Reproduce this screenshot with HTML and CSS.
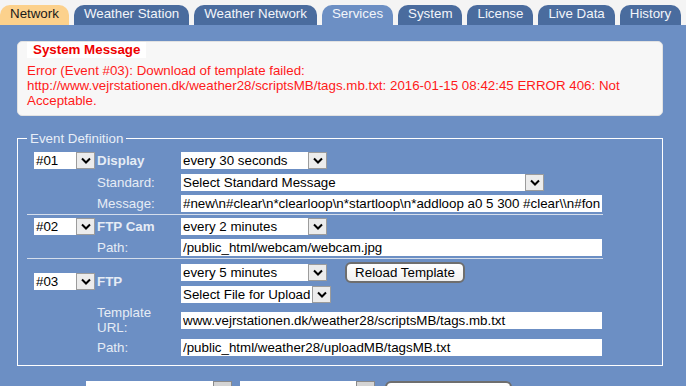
FILE: index.html
```html
<!DOCTYPE html>
<html lang="en">
<head>
    <meta charset="UTF-8">
    <title>Services</title>
    <link rel="stylesheet" href="styles.css">
</head>
<body>
    <div class="tabs">
        <span class="tab tab-hover">Network</span>
        <span class="tab">Weather Station</span>
        <span class="tab">Weather Network</span>
        <span class="tab tab-active">Services</span>
        <span class="tab">System</span>
        <span class="tab">License</span>
        <span class="tab">Live Data</span>
        <span class="tab">History</span>
    </div>

    <div class="page">
        <div class="message">
            <div class="message-title">System Message</div>
            <p class="message-text">Error (Event #03): Download of template failed: http://www.vejrstationen.dk/weather28/scriptsMB/tags.mb.txt: 2016-01-15 08:42:45 ERROR 406: Not Acceptable.</p>
        </div>

        <fieldset class="events">
            <legend>Event Definition</legend>

            <div class="event ev1">
                <span class="sel w-num c1"><span class="sel-val">#01</span><span class="sel-btn"><svg width="10" height="7" viewBox="0 0 10 7"><path d="M1 1.5 L5 5.5 L9 1.5" fill="none" stroke="#000" stroke-width="2"/></svg></span></span>
                <span class="name c2">Display</span>
                <span class="sel w-interval c3"><span class="sel-val">every 30 seconds</span><span class="sel-btn"><svg width="10" height="7" viewBox="0 0 10 7"><path d="M1 1.5 L5 5.5 L9 1.5" fill="none" stroke="#000" stroke-width="2"/></svg></span></span>

                <span class="label c2">Standard:</span>
                <span class="sel w-standard c3"><span class="sel-val">Select Standard Message</span><span class="sel-btn"><svg width="10" height="7" viewBox="0 0 10 7"><path d="M1 1.5 L5 5.5 L9 1.5" fill="none" stroke="#000" stroke-width="2"/></svg></span></span>

                <span class="label c2">Message:</span>
                <input class="field c3" type="text" value="#new\n#clear\n*clearloop\n*startloop\n*addloop a0 5 300 #clear\\n#font 2\n#text">
            </div>

            <div class="event ev2">
                <span class="sel w-num c1"><span class="sel-val">#02</span><span class="sel-btn"><svg width="10" height="7" viewBox="0 0 10 7"><path d="M1 1.5 L5 5.5 L9 1.5" fill="none" stroke="#000" stroke-width="2"/></svg></span></span>
                <span class="name c2">FTP Cam</span>
                <span class="sel w-interval c3"><span class="sel-val">every 2 minutes</span><span class="sel-btn"><svg width="10" height="7" viewBox="0 0 10 7"><path d="M1 1.5 L5 5.5 L9 1.5" fill="none" stroke="#000" stroke-width="2"/></svg></span></span>

                <span class="label c2">Path:</span>
                <input class="field c3" type="text" value="/public_html/webcam/webcam.jpg">
            </div>

            <div class="event ev3">
                <span class="sel w-num c1 span2"><span class="sel-val">#03</span><span class="sel-btn"><svg width="10" height="7" viewBox="0 0 10 7"><path d="M1 1.5 L5 5.5 L9 1.5" fill="none" stroke="#000" stroke-width="2"/></svg></span></span>
                <span class="name c2 span2">FTP</span>
                <div class="c3 inline">
                    <span class="sel w-interval"><span class="sel-val">every 5 minutes</span><span class="sel-btn"><svg width="10" height="7" viewBox="0 0 10 7"><path d="M1 1.5 L5 5.5 L9 1.5" fill="none" stroke="#000" stroke-width="2"/></svg></span></span>
                    <button class="btn" type="button">Reload Template</button>
                </div>
                <span class="sel w-file c3"><span class="sel-val">Select File for Upload</span><span class="sel-btn"><svg width="10" height="7" viewBox="0 0 10 7"><path d="M1 1.5 L5 5.5 L9 1.5" fill="none" stroke="#000" stroke-width="2"/></svg></span></span>

                <span class="label c2">Template URL:</span>
                <input class="field c3" type="text" value="www.vejrstationen.dk/weather28/scriptsMB/tags.mb.txt">

                <span class="label c2">Path:</span>
                <input class="field c3" type="text" value="/public_html/weather28/uploadMB/tagsMB.txt">
            </div>
        </fieldset>

        <div class="footer">
            <span class="sel w-foot1"><span class="sel-val"></span><span class="sel-btn"></span></span>
            <span class="sel w-foot2"><span class="sel-val"></span><span class="sel-btn"></span></span>
            <button class="btn btn-foot" type="button"></button>
        </div>
    </div>
</body>
</html>
```

FILE: styles.css
```css
body {
    margin: 0;
    background-color: #6c8fc4;
    font-family: "Liberation Sans", Arial, sans-serif;
    font-size: 10pt;
    overflow: hidden;
}
.tabs {
    display: flex;
    gap: 5px;
    padding-top: 5px;
    background-color: #f4f4f4;
}
.tab {
    height: 17px;
    line-height: 17px;
    padding: 0 10px 3px 10px;
    border-radius: 10px 10px 0 0;
    background-color: #4a6c9e;
    color: #f2f5fa;
    white-space: nowrap;
}
.tab-hover {
    background-color: #fcd18c;
    color: #1a1a1a;
}
.tab-active {
    background-color: #6c8fc4;
}
.page {
    padding: 16px 0 0 17px;
}
.message {
    width: 644px;
    background: #f7f7f7;
    border: 1px solid #e2e2e2;
    border-radius: 5px;
    padding: 0 0 7px 0;
}
.message-title {
    display: inline-block;
    margin-left: 9px;
    padding: 0 6px;
    line-height: 16px;
    background: white;
    color: #ee0000;
    font-weight: bold;
}
.message-text {
    margin: 5px 0 0 0;
    padding: 0 16px 0 9px;
    color: #ff1a1a;
}
.events {
    box-sizing: border-box;
    width: 646px;
    min-width: 0;
    margin: 15px 0 0 0;
    padding: 4px 0 8px 9px;
    border: 1px solid #ffffff;
}
.events legend {
    padding: 0 3px;
    color: #e8eef7;
}
.event {
    display: grid;
    width: 576px;
    grid-template-columns: 70px 84px 422px;
    align-items: center;
}
.ev1 {
    grid-template-rows: 21px 22px 21px;
    border-bottom: 1px solid #d5deec;
}
.ev2 {
    grid-template-rows: 22px 21px;
    border-bottom: 1px solid #d5deec;
}
.ev3 {
    grid-template-rows: 26px 18px 34px 20px;
}
.c1 { grid-column: 1; margin-left: 7px; }
.c2 { grid-column: 2; }
.c3 { grid-column: 3; }
.span2 { grid-row: span 2; }
.name {
    font-weight: bold;
    color: #e6ecf5;
}
.label {
    color: #e6ecf5;
}
.inline {
    display: flex;
    align-items: center;
    gap: 18px;
}
.sel {
    display: inline-flex;
    height: 17px;
    background: white;
    color: black;
    box-sizing: border-box;
}
.sel-val {
    flex: 1;
    padding-left: 2px;
    line-height: 17px;
    white-space: nowrap;
    overflow: hidden;
}
.sel-btn {
    width: 19px;
    box-sizing: border-box;
    border: 1px solid #9c9c9c;
    background: #ececec;
    display: flex;
    align-items: center;
    justify-content: center;
}
.w-num { width: 61px; }
.w-interval { width: 146px; }
.w-standard { width: 363px; }
.w-file { width: 150px; }
.field {
    box-sizing: border-box;
    width: 421px;
    height: 17px;
    border: none;
    padding: 0 2px;
    margin: 0;
    background: white;
    color: black;
    font-family: "Liberation Sans", Arial, sans-serif;
    font-size: 10pt;
    outline: none;
}
.btn {
    box-sizing: border-box;
    height: 21px;
    width: 120px;
    padding: 0;
    border: 2px solid #6e6e6e;
    border-radius: 6px;
    background: linear-gradient(#ffffff, #f0f0f0);
    color: black;
    font-family: "Liberation Sans", Arial, sans-serif;
    font-size: 10pt;
}
.footer {
    display: flex;
    margin-top: 15px;
    padding-left: 69px;
}
.w-foot1 { width: 146px; height: 18px; }
.w-foot2 { width: 135px; height: 18px; margin-left: 8px; }
.w-foot1 .sel-btn, .w-foot2 .sel-btn { border-color: #8a8a8a; background: #d4d4d4; }
.btn-foot {
    width: 127px;
    margin-left: 10px;
}
```
